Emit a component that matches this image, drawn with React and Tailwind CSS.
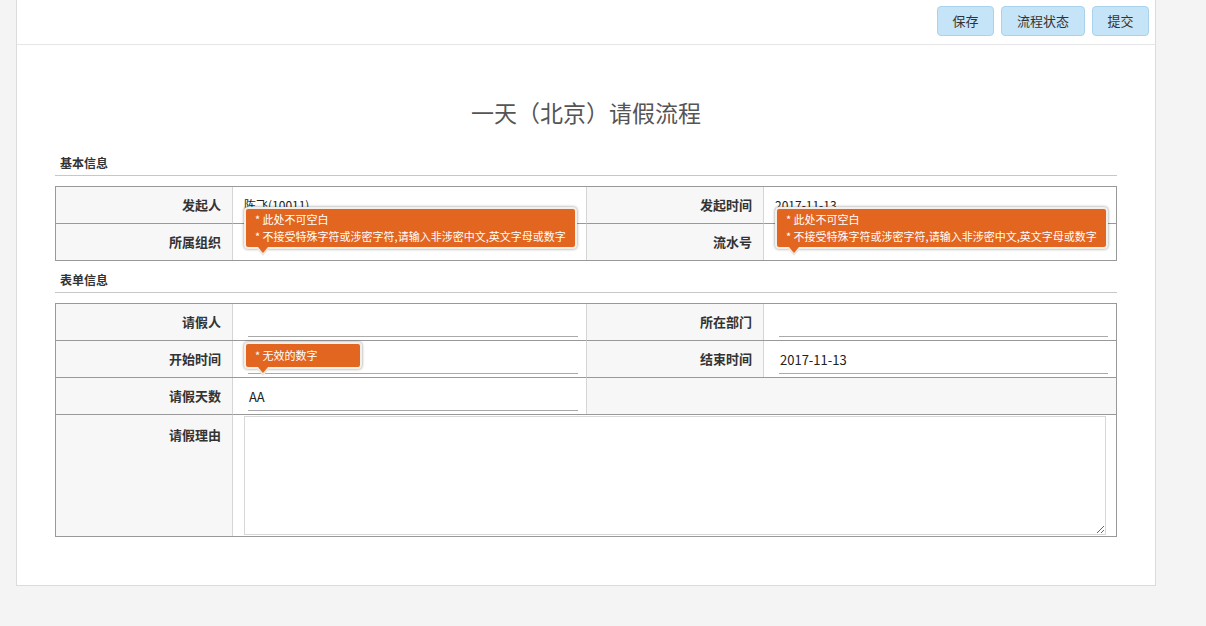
const FONT = { fontFamily: '"Noto Sans CJK SC", "Liberation Sans", sans-serif' };

function Tip({ lines, className, boxClass = "" }) {
  return (
    <div className={`absolute z-10 ${className}`}>
      <div className={`rounded-[4px] border-2 border-[#f4efe9] bg-[#e2661f] px-[9px] py-[2px] text-[11px] leading-[17px] text-white shadow-[0_0_3px_rgba(0,0,0,0.45)] ${boxClass}`}>
        {lines.map((l) => (
          <div key={l} className="whitespace-nowrap">* {l}</div>
        ))}
      </div>
      <div className="relative ml-[12px] h-0 w-0 -mt-[1px] border-x-[7px] border-t-[8px] border-x-transparent border-t-[#ece6df]">
        <div className="absolute -left-[5px] -top-[9px] h-0 w-0 border-x-[5px] border-t-[6px] border-x-transparent border-t-[#e2661f]" />
      </div>
    </div>
  );
}

function Label({ children, className = "" }) {
  return (
    <div className={`flex items-center justify-end bg-[#f7f7f7] pr-[11px] text-[13px] font-bold text-[#333] ${className}`}>
      {children}
    </div>
  );
}

function Field({ value, children }) {
  return (
    <div className="relative h-full border-l border-[#d5d5d5] bg-white pl-[15px] pr-[8px]">
      <div className="pt-[6px]">
        <div className="flex h-[27px] items-center border-b border-[#aaa] pl-[1px] text-[13px] text-[#222]">
          {value}
        </div>
      </div>
      {children}
    </div>
  );
}

const errLines = ["此处不可空白", "不接受特殊字符或涉密字符,请输入非涉密中文,英文字母或数字"];

export default function App() {
  return (
    <div className="min-h-[626px] bg-[#f4f4f4]" style={FONT}>
      <div className="ml-[16px] w-[1140px] border-x border-b border-[#dcdcdc] bg-white">
        <div className="flex h-[45px] items-start justify-end gap-[7px] border-b border-[#e6e6e6] pr-[6px] pt-[6px]">
          <button className="h-[30px] w-[57px] rounded-[4px] border border-[#a9d2ec] bg-[#c6e4f7] text-[13px] text-[#333]">保存</button>
          <button className="h-[30px] w-[84px] rounded-[4px] border border-[#a9d2ec] bg-[#c6e4f7] text-[13px] text-[#333]">流程状态</button>
          <button className="h-[30px] w-[57px] rounded-[4px] border border-[#a9d2ec] bg-[#c6e4f7] text-[13px] text-[#333]">提交</button>
        </div>

        <div className="px-[38px] pb-[48px]">
          <h1 className="mt-[50px] text-center text-[23px] leading-[34px] text-[#555]">一天（北京）请假流程</h1>

          <div className="mt-[22px] border-b border-[#c8c8c8] pl-[5px] text-[12px] font-bold leading-[24px] text-[#333]">基本信息</div>
          <div className="mt-[10px] grid grid-cols-[176px_354px_177px_1fr] border border-[#999]">
            <Label className="h-[36px]">发起人</Label>
            <div className="relative flex items-center border-l border-[#d5d5d5] pl-[11px] text-[12px] text-[#222]">陈飞(10011)</div>
            <Label className="border-l border-[#d5d5d5]">发起时间</Label>
            <div className="flex items-center border-l border-[#d5d5d5] pl-[11px] text-[12px] text-[#222]">2017-11-13</div>

            <Label className="h-[37px] border-t border-[#999]">所属组织</Label>
            <div className="relative border-l border-t border-[#d5d5d5] border-t-[#999]">
              <Tip lines={errLines} className="left-[11px] -top-[17px]" />
            </div>
            <Label className="border-l border-t border-[#d5d5d5] border-t-[#999]">流水号</Label>
            <div className="relative border-l border-t border-[#d5d5d5] border-t-[#999]">
              <Tip lines={errLines} className="left-[11px] -top-[17px]" />
            </div>
          </div>

          <div className="mt-[7px] border-b border-[#c8c8c8] pl-[5px] text-[12px] font-bold leading-[24px] text-[#333]">表单信息</div>
          <div className="mt-[10px] grid grid-cols-[176px_354px_177px_1fr] border border-[#999]">
            <Label className="h-[36px]">请假人</Label>
            <Field value="" />
            <Label className="border-l border-[#d5d5d5]">所在部门</Label>
            <Field value="" />

            <Label className="h-[37px] border-t border-[#999]">开始时间</Label>
            <div className="border-t border-[#999]">
              <Field value="">
                <Tip lines={["无效的数字"]} className="left-[11px] top-[1px]" boxClass="w-[118px] py-[3px]" />
              </Field>
            </div>
            <Label className="border-l border-t border-[#d5d5d5] border-t-[#999]">结束时间</Label>
            <div className="border-t border-[#999]">
              <Field value="2017-11-13" />
            </div>

            <Label className="h-[37px] border-t border-[#999]">请假天数</Label>
            <div className="border-t border-[#999]">
              <Field value="AA" />
            </div>
            <div className="col-span-2 border-l border-t border-[#d5d5d5] border-t-[#999] bg-[#f7f7f7]" />

            <div className="flex h-[122px] justify-end border-t border-[#999] bg-[#f7f7f7] pr-[11px] pt-[10px] text-[13px] font-bold text-[#333]">请假理由</div>
            <div className="col-span-3 border-l border-t border-[#d5d5d5] border-t-[#999] bg-white pb-[1px] pl-[11px] pr-[10px] pt-[1px]">
              <textarea className="block h-full w-full resize border border-[#d8d8d8] bg-white outline-none" />
            </div>
          </div>
        </div>
      </div>
    </div>
  );
}
